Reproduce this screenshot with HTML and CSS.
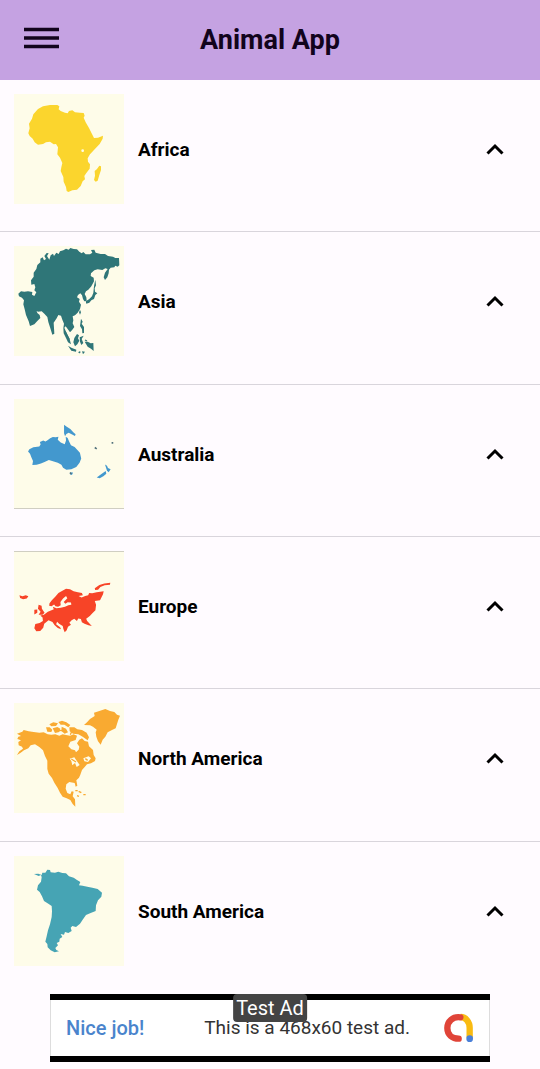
FILE: index.html
```html
<!DOCTYPE html>
<html lang="en">
<head>
  <meta charset="UTF-8">
  <meta name="viewport" content="width=device-width, initial-scale=1">
  <title>Animal App</title>
  <link rel="stylesheet" href="styles.css">
</head>
<body>

  <header class="topbar">
    <button class="menu-button" aria-label="Open menu">
      <svg class="menu-icon" viewBox="0 0 36 24"><path d="M0 3.500H35M0 12H35M0 20.500H35" fill="none" stroke="#12041c" stroke-width="3.400"/></svg>
    </button>
    <h1 class="title">Animal App</h1>
  </header>

  <main class="list">
    <button class="row" aria-expanded="true">
      <svg class="map" viewBox="18 18 330 330" fill="#fbd52d">
        <path d="M90 63L105 55 126 51 148 51 154 55 152 64 158 69 171 74 179 76 183 69 193 67 201 73 216 74 227 75 230 83 227 89 233 103 243 120 252 138 258 150 270 149 285 143 284 152 275 168 260 184 246 199 239 211 240 221 246 229 245 242 235 255 229 264 231 274 224 280 218 294 207 305 193 307 181 312 176 309 174 297 167 281 166 267 158 249 160 238 163 225 156 209 148 199 149 188 150 178 144 168 137 169 126 161 114 163 105 168 90 170 80 163 74 152 65 144 61 136 65 121 63 107 72 92 76 79Z"/>
        <path d="M274 233L279 235 279 246 274 261 269 278 263 281 258 276 261 263 260 249 267 243Z"/>
        <circle cx="224" cy="188" r="4" fill="#fefce9"/>
      </svg>
      <span class="name">Africa</span>
      <svg class="chevron" viewBox="0 0 18 12"><path d="M1.500 10.500L9 3L16.500 10.500" fill="none" stroke="#000" stroke-width="3"/></svg>
    </button>

    <button class="row" aria-expanded="true">
      <svg class="map" viewBox="18 18 330 330" fill="#2f7678">
        <path d="M97 56L104 52 108 61 114 57 109 48 116 39 122 40 117 48 124 59 128 46 135 41 138 48 145 38 152 42 156 34 166 31 174 26 182 29 187 24 197 27 207 28 214 35 221 40 226 36 233 43 246 43 253 38 249 30 259 29 263 38 278 42 291 42 300 48 315 50 322 54 333 54 334 76 329 80 322 77 319 82 308 83 303 89 302 100 298 112 291 120 287 112 291 98 299 87 292 85 283 90 269 88 259 91 249 100 248 108 257 113 258 124 250 139 241 149 234 154 230 162 235 172 236 182 229 184 225 177 222 166 217 160 210 165 207 172 215 177 213 185 219 194 216 207 209 218 201 226 194 229 196 241 194 250 199 261 193 269 186 277 179 267 173 259 169 263 177 282 185 298 189 313 180 307 174 294 167 280 166 264 168 251 163 239 159 227 151 225 146 235 137 248 138 264 139 281 133 284 127 265 121 246 118 231 109 221 101 214 90 215 80 209 78 201 85 211 88 219 95 225 97 234 88 243 79 253 66 258 62 244 54 225 50 208 46 193 48 181 42 173 33 169 31 161 39 154 49 155 60 154 73 156 72 164 79 168 85 157 79 151 82 142 79 132 70 134 69 121 77 110 77 98 85 87 88 75 97 67Z"/>
        <path d="M262 119L264 136 260 145 261 155 268 160 262 165 258 177 250 181 244 188 235 191 233 184 243 178 252 169 256 158 258 139ZM216 209L219 217 216 224 213 217ZM219 236L224 245 221 251 228 261 228 279 223 280 222 268 216 258ZM207 282L213 286 210 295 214 302 208 313 201 319 196 307 199 294ZM215 292L227 287 221 297 226 309 220 315 216 305ZM180 317L190 323 205 329 204 335 190 332ZM239 305L248 310 256 309 257 333 249 326 239 320 230 305ZM213 334L218 335 216 340 211 339ZM222 334L231 335 225 343Z"/>
        <path d="M171 274L184 299M231 300L237 303" fill="none" stroke="#2f7678" stroke-width="4"/>
      </svg>
      <span class="name">Asia</span>
      <svg class="chevron" viewBox="0 0 18 12"><path d="M1.500 10.500L9 3L16.500 10.500" fill="none" stroke="#000" stroke-width="3"/></svg>
    </button>

    <button class="row" aria-expanded="true">
      <svg class="map map-line-bottom" viewBox="18 18 330 330" fill="#4398ce">
        <path d="M63 170L75 164 93 162 97 156 95 148 105 144 112 147 118 143 126 137 134 133 143 134 151 132 149 141 158 150 170 155 174 144 173 132 179 136 183 146 189 158 200 163 207 171 216 181 220 198 215 211 205 224 190 231 175 232 165 226 160 217 149 211 137 207 122 203 109 209 98 213 85 217 72 218 74 206 69 194 65 184 59 177Z"/>
        <path d="M168 96L175 101 187 109 196 119 203 125 201 130 191 125 182 120 175 124 171 131 168 122ZM185 241L194 240 194 245 189 249ZM292 216L298 220 301 227 309 231 303 240 298 235ZM294 236L296 244 287 252 276 258 267 256 276 249Z"/>
        <path d="M261 165L267 169M312 151H317M186 241L190 245" fill="none" stroke="#53727b" stroke-width="5"/>
      </svg>
      <span class="name">Australia</span>
      <svg class="chevron" viewBox="0 0 18 12"><path d="M1.500 10.500L9 3L16.500 10.500" fill="none" stroke="#000" stroke-width="3"/></svg>
    </button>

    <button class="row" aria-expanded="true">
      <svg class="map map-line-top" viewBox="18 18 330 330" fill="#f74427">
        <path d="M124 173L131 164 142 153 151 142 163 135 174 129 186 131 197 137 210 140 222 142 225 149 212 151 221 156 232 151 241 149 244 142 253 143 267 140 288 137 286 146 277 164 261 166 265 178 263 194 253 204 246 212 235 220 238 227 252 242 242 240 230 235 222 231 219 221 211 219 207 227 199 220 191 225 184 232 189 238 180 244 176 255 170 261 166 251 164 242 153 235 147 229 144 237 156 246 159 252 149 248 139 239 133 230 121 225 108 235 105 247 96 257 84 258 78 249 81 236 94 233 104 227 103 216 96 210 107 208 119 199 130 194 137 191 134 184 145 188 158 187 171 184 181 179 190 178 189 171 179 170 172 175 167 169 178 158 174 151 165 159 157 169 158 179 150 184 142 182 138 177 130 182 123 181Z"/>
        <path d="M33 149L42 152 52 149 60 152 55 159 44 161 35 157ZM91 178L100 181 101 190 109 202 103 208 91 208 97 199 89 190ZM78 193L87 192 87 202 78 207ZM261 128L275 118 290 113 308 111 307 117 291 119 278 124 271 132 262 133Z"/>
      </svg>
      <span class="name">Europe</span>
      <svg class="chevron" viewBox="0 0 18 12"><path d="M1.500 10.500L9 3L16.500 10.500" fill="none" stroke="#000" stroke-width="3"/></svg>
    </button>

    <button class="row" aria-expanded="true">
      <svg class="map" viewBox="18 18 330 330" fill="#f9aa31">
        <path d="M27 110L43 104 47 99 62 103 77 105 94 107 107 106 119 112 130 113 142 112 154 116 164 112 174 114 186 116 197 112 207 116 203 129 187 134 181 148 190 157 201 160 204 166 212 158 214 149 207 139 214 128 222 124 230 132 240 134 243 148 255 159 257 174 263 184 261 192 249 199 237 202 230 210 222 219 217 233 213 242 205 250 208 266 203 269 200 258 184 255 175 262 173 275 178 288 187 292 191 283 197 284 194 298 201 307 202 329 194 321 187 309 176 304 164 299 156 287 149 273 139 257 132 243 122 230 118 216 118 191 111 177 105 160 94 150 81 142 68 145 61 154 48 160 37 168 27 174 34 163 45 155 42 149 32 145 31 135 39 130 28 126 31 119 39 117Z"/>
        <path d="M114 91L125 91 133 98 130 105 118 104ZM124 82L136 76 150 79 144 87 130 88ZM151 75L162 71 175 76 187 84 181 91 169 83 158 83ZM134 94L148 90 157 95 154 105 141 108ZM161 89L174 95 180 106 170 110 160 102ZM184 91L199 91 208 97 222 99 236 107 243 121 239 130 224 119 211 112 195 110 185 103ZM228 84L237 76 246 66 260 57 258 47 274 42 292 36 306 42 319 45 327 53 336 56 331 68 327 81 323 94 312 99 299 106 292 119 284 128 278 143 270 133 265 119 263 106 266 98 255 89 246 85Z"/>
        <path d="M185 185L199 181 206 191 215 204 206 210 201 198 193 205 190 192M226 184L242 178 249 184 240 195 229 193" fill="#fefce9"/>
        <path d="M190 186L204 195M232 185L239 190M150 100L166 101M193 99L187 113M202 281L209 281M212 283L220 287M226 293L233 293M207 296L213 298" fill="none" stroke="#f9aa31" stroke-width="4"/>
      </svg>
      <span class="name">North America</span>
      <svg class="chevron" viewBox="0 0 18 12"><path d="M1.500 10.500L9 3L16.500 10.500" fill="none" stroke="#000" stroke-width="3"/></svg>
    </button>

    <button class="row" aria-expanded="true">
      <svg class="map" viewBox="18 18 330 330" fill="#46a4b4">
        <path d="M78 72L91 71 101 75 103 68 112 68 118 59 126 60 128 67 141 68 151 65 163 69 174 70 183 79 197 83 207 90 217 96 213 106 224 107 238 110 253 113 269 117 282 128 280 140 270 151 264 166 263 183 248 189 234 195 224 209 216 221 204 231 193 228 188 233 191 243 181 249 171 246 168 254 158 252 163 261 155 266 154 275 146 279 150 286 142 294 145 300 153 304 140 307 128 301 119 292 118 282 112 275 116 259 120 241 126 223 131 201 132 184 131 168 121 161 108 153 102 139 95 126 87 119 90 106 99 95 101 82 99 75 92 78Z"/>
      </svg>
      <span class="name">South America</span>
      <svg class="chevron" viewBox="0 0 18 12"><path d="M1.500 10.500L9 3L16.500 10.500" fill="none" stroke="#000" stroke-width="3"/></svg>
    </button>
  </main>

  <footer class="ad-area">
    <a class="ad" href="#">
      <span class="ad-badge">Test Ad</span>
      <span class="ad-praise">Nice job!</span>
      <span class="ad-text">This is a 468x60 test ad.</span>
      <svg class="ad-logo" viewBox="70 84 90 90">
        <path d="M120 96C135 96 147 111 147 128V158" fill="none" stroke="#f9bb12" stroke-width="19"/>
        <path d="M119 97C96 94 80 109 80 129C80 149 95 161 114 161" fill="none" stroke="#e04438" stroke-width="19" stroke-linecap="round"/>
        <circle cx="147" cy="161" r="10" fill="#4a80d8"/>
      </svg>
    </a>
  </footer>

</body>
</html>
```

FILE: styles.css
```css
* { box-sizing: border-box; }
body { margin: 0; min-height: 100vh; display: flex; flex-direction: column; background: #fffbff; color: #000; font-family: Roboto, sans-serif; }
button { border: 0; background: none; padding: 0; color: inherit; font: inherit; cursor: pointer; }
svg { display: block; flex: none; }

.topbar { display: grid; grid-template-columns: 60px 1fr 60px; align-items: center; height: 80px; background: #c5a2e2; color: #12041c; }
.menu-button { padding: 0 0 4px 24px; }
.menu-icon { width: 36px; height: 24px; }
.title { margin: 0; font-size: 27px; line-height: 32px; font-weight: 700; text-align: center; }

.list { flex: 1; display: grid; grid-auto-rows: 1fr; }
.row { display: flex; align-items: center; gap: 14px; width: 100%; padding: 14px 36px 27px 14px; border-bottom: 1px solid #d9d5dc; text-align: left; }
.row:last-child { border-bottom-color: transparent; }
.map { width: 110px; height: 110px; background: #fefce9; }
.map-line-bottom { border-bottom: 1px solid #d0cec2; }
.map-line-top { border-top: 1px solid #d0cec2; }
.name { flex: 1; padding-top: 2px; font-size: 19px; line-height: 24px; font-weight: 700; }
.chevron { width: 18px; height: 12px; }

.ad-area { display: flex; justify-content: center; padding: 0 50px 7px; }
.ad { position: relative; display: flex; align-items: center; width: 100%; height: 68px; padding: 0 16px; border: solid #000; border-width: 6px 0; background: #fff; box-shadow: inset 1px 0 #ddd, inset -1px 0 #ddd; color: #333; font-size: 19px; line-height: 24px; text-decoration: none; }
.ad-badge { position: absolute; top: -6px; left: 50%; transform: translateX(-50%); padding: 2px 3px; border-radius: 4px; background: #444; color: #fff; font-size: 20px; white-space: nowrap; }
.ad-praise { color: #4a84cc; font-size: 20px; font-weight: 500; }
.ad-text { flex: 1; padding-right: 34px; text-align: right; }
.ad-logo { width: 30px; height: 30px; }
```
